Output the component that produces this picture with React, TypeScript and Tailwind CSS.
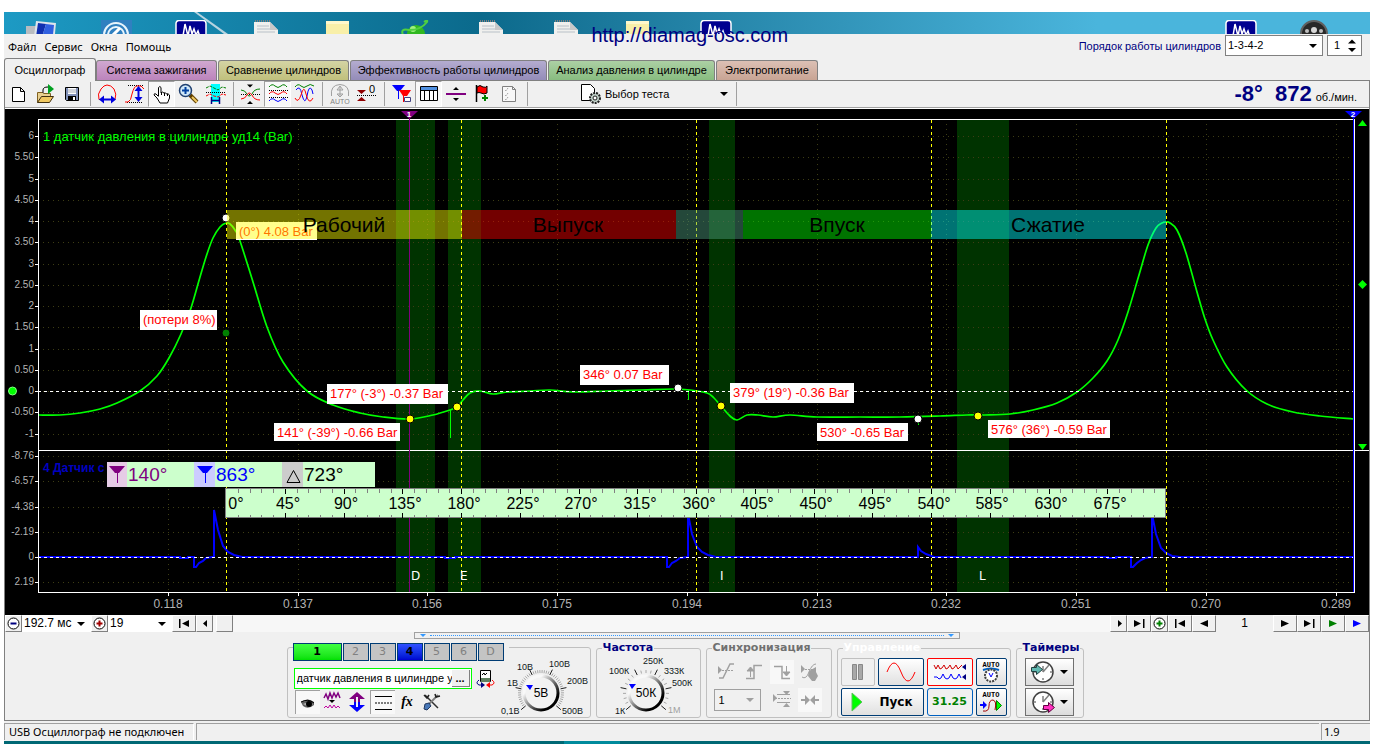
import type { ReactNode } from "react";

const UI = "font-['Liberation_Sans',Arial,sans-serif]";
const TAHOMA = "font-['Noto_Sans','DejaVu_Sans',sans-serif]";

type Pt = [number, number];

// Catmull-Rom spline through the sample points
function spline(points: Pt[]) {
  let d = `M${points[0][0]} ${points[0][1]}`;
  for (let i = 0; i < points.length - 1; i++) {
    const p0 = points[Math.max(0, i - 1)];
    const p1 = points[i];
    const p2 = points[i + 1];
    const p3 = points[Math.min(points.length - 1, i + 2)];
    d += `C${p1[0] + (p2[0] - p0[0]) / 6} ${p1[1] + (p2[1] - p0[1]) / 6} ${p2[0] - (p3[0] - p1[0]) / 6} ${p2[1] - (p3[1] - p1[1]) / 6} ${p2[0]} ${p2[1]}`;
  }
  return d;
}

const PRESSURE: Pt[] = [
  [39, 415], [60, 415], [80, 413], [100, 409], [117, 403], [140, 391], [157, 376], [169, 358], [181, 334],
  [191, 308], [200, 277], [207, 254], [213, 238], [220, 227], [226, 223], [230, 224], [235, 230], [240, 241],
  [253, 282], [267, 327], [283, 362], [307, 391], [333, 405], [360, 413], [383, 417], [410, 419], [433, 415],
  [450, 410], [457, 407], [463, 400], [470, 393], [480, 391], [493, 394], [507, 392], [530, 391], [550, 390],
  [573, 392], [607, 391], [640, 390], [673, 389], [690, 390], [707, 393], [714, 398], [721, 406], [730, 416],
  [737, 420], [747, 415], [758, 415], [773, 417], [790, 415], [817, 417], [860, 417], [900, 417], [940, 416],
  [967, 415], [985, 415], [1010, 414], [1033, 410], [1057, 403], [1077, 392], [1093, 378], [1107, 361],
  [1118, 340], [1128, 312], [1139, 275], [1148, 245], [1156, 228], [1162, 223], [1166, 222], [1170, 223],
  [1177, 230], [1186, 253], [1197, 292], [1205, 319], [1213, 340], [1227, 367], [1246, 390], [1267, 404],
  [1293, 412], [1320, 416], [1353, 419],
];

const IGNITION =
  "M39 557H180v1h8v-1h6v10h2l3-4 4-2 3-3 6-1h2V510l4 20 5 16 5 6 6 3 8 2H445v1h10v-1H667v10h2l3-4 4-2 4-3 7-1h1V514l4 20 5 13 5 5 6 3 8 2H918V547l3 4 5 3 8 3H1108v1h8v-1h15v10h2l4-4 4-3 4-2 6-1h1V514l4 20 5 14 5 5 6 3 8 1H1353";

const UPPER: [string, number][] = [
  ["6", 136], ["5.50", 157], ["5", 179], ["4.50", 200], ["4", 221], ["3.50", 242], ["3", 264], ["2.50", 285],
  ["2", 306], ["1.50", 327], ["1", 349], ["0.50", 370], ["0", 391], ["-0.50", 412], ["-1", 434],
];
const LOWER: [string, number][] = [
  ["-8.76", 456], ["-6.57", 481], ["-4.38", 507], ["-2.19", 532], ["0", 557], ["2.19", 582],
];
const TIMES: [string, number][] = [
  ["0.118", 168], ["0.137", 298], ["0.156", 427], ["0.175", 557], ["0.194", 687],
  ["0.213", 817], ["0.232", 946], ["0.251", 1076], ["0.270", 1206], ["0.289", 1336],
];
const WINDOWS = [
  { x: 396, w: 39, name: "D", at: 411 },
  { x: 448, w: 33, name: "E", at: 460 },
  { x: 709, w: 26, name: "I", at: 720 },
  { x: 957, w: 52, name: "L", at: 979 },
];
const CALLOUTS = [
  { x: 140, y: 310, w: 77, h: 20, t: "(потери 8%)" },
  { x: 327, y: 384, w: 121, h: 20, t: "177° (-3°) -0.37 Bar" },
  { x: 274, y: 423, w: 126, h: 18, t: "141° (-39°) -0.66 Bar" },
  { x: 580, y: 365, w: 89, h: 20, t: "346° 0.07 Bar" },
  { x: 730, y: 383, w: 124, h: 20, t: "379° (19°) -0.36 Bar" },
  { x: 817, y: 423, w: 91, h: 18, t: "530° -0.65 Bar" },
  { x: 988, y: 420, w: 122, h: 18, t: "576° (36°) -0.59 Bar" },
  { x: 236, y: 222, w: 81, h: 18, t: "(0°) 4.08 Bar" },
];
const DOTS: [number, number, string][] = [
  [226, 218, "#fff"], [226, 333, "#008000"], [410, 419, "#ff0"], [457, 407, "#ff0"],
  [678, 388, "#fff"], [721, 406, "#ff0"], [918, 419, "#fff"], [978, 416, "#ff0"],
];
const PHASES = [
  { x: 227, w: 235, c: "#ffff00", t: "Рабочий", at: 344 },
  { x: 462, w: 214, c: "#ff0000", t: "Выпуск", at: 568 },
  { x: 676, w: 67, c: "#50a080", t: "", at: 0 },
  { x: 743, w: 188, c: "#00ff00", t: "Впуск", at: 837 },
  { x: 931, w: 235, c: "#00ffff", t: "Сжатие", at: 1048 },
];

function Scope() {
  return (
    <svg
      viewBox="5 109 1364 506"
      className="block w-full h-auto bg-black font-['Liberation_Sans',Arial,sans-serif]"
      role="img"
      aria-label="Осциллограмма"
    >
      {/* cylinder windows and grid */}
      <g shapeRendering="crispEdges">
        {WINDOWS.map((b) => (
          <rect key={b.name} x={b.x} y={120} width={b.w} height={472} fill="#003300" />
        ))}
        {[...UPPER, ...LOWER].map(([t, y]) => (
          <g key={t + y}>
            <path d={`M43 ${y + 0.5}H1353`} stroke="#3d3d14" strokeDasharray="1 4" />
            <path d={`M35 ${y + 0.5}H38`} stroke="#fff" />
          </g>
        ))}
        {TIMES.map(([t, x]) => (
          <g key={t}>
            <path d={`M${x + 0.5} 124V592`} stroke="#3d3d14" strokeDasharray="1 4" />
            <path d={`M${x + 0.5} 593V596`} stroke="#fff" />
          </g>
        ))}
      </g>

      <g className="text-[10px]" fill="#b4b4b4" textAnchor="end">
        {[...UPPER, ...LOWER].map(([t, y]) => (
          <text key={t + y} x={34} y={y + 3}>{t}</text>
        ))}
      </g>
      <g className="text-[12px]" fill="#b4b4b4" textAnchor="middle">
        {TIMES.map(([t, x]) => (
          <text key={t} x={x} y={608}>{t}</text>
        ))}
      </g>

      <text x={43} y={141} className="text-[13px]" fill="#00ff00">1 датчик давления в цилиндре уд14 (Bar)</text>
      <text x={43} y={472} className="text-[12px] font-bold" fill="#0000c0">4 Датчик с</text>

      {/* traces */}
      <path d={IGNITION} fill="none" stroke="#0000ff" strokeWidth={2} />
      <path d={spline(PRESSURE)} fill="none" stroke="#00ff00" strokeWidth={1.7} />
      <path d="M450.5 410V438M688.5 390V400M918.5 418V425" stroke="#00ff00" />

      <g shapeRendering="crispEdges" fill="none">
        <path d="M38 391.5H1353M38 557.5H1353" stroke="#fff" strokeDasharray="3 3" />
        <path d="M226.5 120V592M461.5 120V592M696.5 120V592M931.5 120V592M1166.5 120V592" stroke="#ffff00" strokeDasharray="3 3" />
        <path d="M38.5 593V119.5H1354.5V592.5H38M38 450.5H1369" stroke="#fff" />
        <path d="M409.5 118V592" stroke="#800080" />
        <path d="M1353.5 118V592" stroke="#0000ff" />
      </g>

      {DOTS.map(([x, y, c]) => (
        <circle key={x + "-" + y} cx={x} cy={y} r={4} fill={c} stroke="#000" />
      ))}
      {CALLOUTS.map((c) => (
        <g key={c.t}>
          <rect x={c.x} y={c.y} width={c.w} height={c.h} fill="#fff" />
          <text x={c.x + 3} y={c.y + 14} className="text-[13px]" fill="#ff0000">{c.t}</text>
        </g>
      ))}

      {/* stroke phases */}
      {PHASES.map((p) => (
        <g key={p.c}>
          <rect x={p.x} y={210} width={p.w} height={29} fill={p.c} opacity={0.45} shapeRendering="crispEdges" />
          <text x={p.at} y={232} textAnchor="middle" className="text-[21px]" fill="#000">{p.t}</text>
        </g>
      ))}

      <g className="text-[12px] font-['DejaVu_Sans',sans-serif]" fill="#fff">
        {WINDOWS.map((b) => (
          <text key={b.name} x={b.at} y={580}>{b.name}</text>
        ))}
      </g>

      {/* cursor read-out */}
      <rect x={107} y={462} width={268} height={25} fill="#ccffcc" />
      <rect x={107} y={462} width={20} height={25} fill="#e6cce6" />
      <rect x={194} y={462} width={21} height={25} fill="#ccccff" />
      <rect x={282} y={462} width={21} height={25} fill="#cccccc" />
      <path d="M109 466H125L119 473H115z" fill="#800080" />
      <path d="M117.5 470V483" stroke="#800080" />
      <path d="M197 466H213L207 473H203z" fill="#0000ff" />
      <path d="M205.5 470V483" stroke="#0000ff" />
      <path d="M287 482.5L293.5 470.5L300 482.5z" fill="none" stroke="#000" />
      <g className="text-[19px]">
        <text x={128} y={481} fill="#800080">140°</text>
        <text x={216} y={481} fill="#0000ff">863°</text>
        <text x={304} y={481} fill="#000">723°</text>
      </g>

      {/* crank angle ruler */}
      <rect x={225.5} y={488.5} width={940} height={29} fill="#ccffcc" stroke="#808080" />
      <g shapeRendering="crispEdges">
        {Array.from({ length: 79 }, (_, i) => i + 1).map((i) => {
          const x = Math.round(226 + i * 11.75) + 0.5;
          const major = i % 5 === 0;
          return (
            <path
              key={i}
              d={major ? `M${x} 489V494M${x} 513V518` : `M${x} 489V493M${x} 515V518`}
              stroke={major ? "#000" : "#808080"}
            />
          );
        })}
      </g>
      <g className="text-[16px]" textAnchor="middle">
        {Array.from({ length: 16 }, (_, i) => (
          <text key={i} x={i === 0 ? 236 : Math.round(226 + i * 58.72) + 3} y={509}>{i * 45}°</text>
        ))}
      </g>

      {/* cursor flags and level markers */}
      <path d="M401 111H418L409.5 119z" fill="#800080" />
      <path d="M1345 111H1362L1353.5 119z" fill="#0000ff" />
      <g className="text-[8px] font-bold" fill="#fff" textAnchor="middle">
        <text x={409} y={117}>1</text>
        <text x={1353} y={117}>2</text>
      </g>
      <g fill="#00ff00">
        <path d="M1358 126L1362.5 120L1367 126z" />
        <path d="M1358 284.5L1362.5 280L1367 284.5L1362.5 289z" />
        <path d="M1358 444L1367 444L1362.5 450z" />
        <circle cx={12.5} cy={391} r={4} stroke="#80ff80" />
      </g>
    </svg>
  );
}

function Ico({ children, w = 24, h = 24 }: { children: ReactNode; w?: number; h?: number }) {
  return (
    <svg width={w} height={h} viewBox={`0 0 ${w} ${h}`} fill="none" className="shrink-0" aria-hidden="true">
      {children}
    </svg>
  );
}

function Tool({ label, on, children }: { label: string; on?: boolean; children: ReactNode }) {
  return (
    <button
      aria-label={label}
      className={
        on
          ? "w-[27px] h-[26px] flex items-center justify-center border border-t-[#a0a0a0] border-l-[#a0a0a0] border-r-white border-b-white bg-[#f8f8f8]"
          : "w-[27px] h-[26px] flex items-center justify-center"
      }
    >
      {children}
    </button>
  );
}

function Sep() {
  return <div className="w-2 h-6 flex justify-center shrink-0"><div className="w-px bg-[#a0a0a0]" /></div>;
}

function DownArrow() {
  return (
    <svg width="8" height="4" viewBox="0 0 8 4" aria-hidden="true" className="shrink-0">
      <path d="M0 0h8L4 4z" fill="currentColor" />
    </svg>
  );
}

function Toolbar() {
  return (
    <div className="flex items-center h-[27px] border-b border-[#a0a0a0]">
      <Tool label="Новый"><Ico><path d="M5.500 5.500h8l4 4v10h-12zM13.500 5.500v4h4" fill="#fff" stroke="#000" /></Ico></Tool>
      <Tool label="Открыть">
        <Ico>
          <path d="M3.500 20.500v-10h5l1 1h7v3" fill="#e8d090" stroke="#806020" />
          <path d="M3.500 20.500l4-6h12l-4 6z" fill="#f0c860" stroke="#403010" />
          <path d="M9 11V8q0-3 5-3" stroke="#000" />
          <path d="M14 2l6 5-6 5z" fill="#00a020" />
        </Ico>
      </Tool>
      <Tool label="Сохранить">
        <Ico>
          <path d="M4.500 5.500h13v13h-12l-1-1z" fill="#8090b8" stroke="#000" />
          <path d="M7 6h8v6H7z" fill="#fff" />
          <path d="M7 8h8M7 10h8" stroke="#a0a8b8" />
          <path d="M7 14h8v4H7z" fill="#000" />
          <path d="M12 15h2v3h-2z" fill="#fff" />
        </Ico>
      </Tool>
      <Sep />
      <Tool label="Период">
        <Ico>
          <path d="M6 17.500H3Q1 12 5 7Q8 3 11 3Q15 3 18 7Q21 12 19 17.500h-3" stroke="#ff0000" />
          <path d="M6 17.500h10" stroke="#0000e0" strokeWidth="2" />
          <path d="M3 17.500l5-4v8zM20 17.500l-5-4v8z" fill="#0000e0" />
        </Ico>
      </Tool>
      <Tool label="Амплитуда">
        <Ico>
          <path d="M5 3.500h16M4 20.500h16" stroke="#000" strokeDasharray="1 1" />
          <path d="M2 20h3q3-1 4-8q2-8 5-8h4l3 3" stroke="#ff0000" />
          <path d="M15.500 8v9" stroke="#0000e0" strokeWidth="2" />
          <path d="M15.500 4l-4 5h8zM15.500 20l-4-5h8z" fill="#0000e0" />
        </Ico>
      </Tool>
      <Tool label="Рука" on>
        <Ico>
          <path d="M8.500 14V5.500q1.500-2 2.500 0V11q1-2 3 0q1.500-1 2.500 1q1.500-1 3 1v3l-2 5H10l-3-5-3-3q0-2 2-1l2.500 2.500" fill="#fff" stroke="#000" />
          <path d="M11.500 10v3M14.500 11v3M17.500 12v2" stroke="#000" />
        </Ico>
      </Tool>
      <Tool label="Масштаб">
        <Ico>
          <path d="M13 13l7 7" stroke="#604000" strokeWidth="4" />
          <path d="M15 15l5 5" stroke="#f0c860" strokeWidth="2" />
          <circle cx="8.500" cy="8.500" r="6" fill="#d0e8f8" stroke="#204070" strokeWidth="1.500" />
          <path d="M5 8.500h7M8.500 5v7" stroke="#0040a0" strokeWidth="2" />
        </Ico>
      </Tool>
      <Tool label="Участок">
        <Ico>
          <path d="M7 2h9v18H7z" fill="#00ffff" />
          <path d="M2 6l4-2 4 2 4 2 4-3 4 1" stroke="#008000" strokeDasharray="3 1" />
          <path d="M2 10.500h20" stroke="#000" strokeDasharray="1 1" />
          <path d="M2 14l4-2 4 2 4 1 4-3 4 1" stroke="#ff0000" strokeDasharray="3 1" />
          <path d="M7.500 15v7M15.500 15v7M8 18.500h7" stroke="#000080" strokeWidth="1.500" />
        </Ico>
      </Tool>
      <Sep />
      <Tool label="Совместить">
        <Ico>
          <path d="M2 12.500h19" stroke="#000" strokeDasharray="1 1" />
          <path d="M2 8q4 0 6 4t5 0q2-5 8-5" stroke="#008000" />
          <path d="M2 17q4 0 6-4t5 0q2 5 8 5" stroke="#ff0000" />
          <path d="M8 2.500h6l-3 3zM8 22h6l-3-3z" fill="#000" />
        </Ico>
      </Tool>
      <Tool label="Разделить" on>
        <Ico>
          <path d="M3 5q3-4 6-1t6 0 6 1" stroke="#008000" />
          <path d="M3 8.500h19M3 15.500h19" stroke="#000" strokeDasharray="1 1" />
          <path d="M3 12q3-4 6-1t6 0 6 1" stroke="#ff0000" />
          <path d="M3 19q3-4 6-1t6 0 6 1" stroke="#0000ff" />
        </Ico>
      </Tool>
      <Tool label="Наложить">
        <Ico>
          <path d="M2 5q3-4 6-1t6 0 7 0" stroke="#008000" />
          <path d="M3 8Q7 2 9 13Q12 24 14 14Q16 2 19 8l1 4" stroke="#0000ff" />
          <path d="M2 16Q5 22 8 13Q11 2 13 12Q16 24 20 16" stroke="#ff0000" />
        </Ico>
      </Tool>
      <Sep />
      <Tool label="Авто">
        <Ico>
          <path d="M3.500 14Q2 3 12 2.500Q22 3 20.500 14" stroke="#a0a0a0" />
          <path d="M12 5v9M12 4l-3 4h6zM12 15l-3-3h6z" stroke="#a0a0a0" />
          <text x="12" y="21.500" textAnchor="middle" className="text-[7px] font-['Liberation_Sans',sans-serif]" fill="#808080">AUTO</text>
        </Ico>
      </Tool>
      <Tool label="Ноль">
        <Ico>
          <path d="M2 8h9l-4.500 4zM2 19h9l-4.500-4z" fill="#900000" />
          <path d="M2 13.500h19" stroke="#000" strokeDasharray="1 1" />
          <text x="14" y="11" className="text-[11px] font-['Liberation_Sans',sans-serif]" fill="#000">0</text>
        </Ico>
      </Tool>
      <Sep />
      <Tool label="Маркеры">
        <Ico>
          <path d="M2 3h13l-5 6H7z" fill="#0000ff" />
          <path d="M8.500 8v9" stroke="#0000ff" />
          <path d="M9 8h12l-4 6h-4z" fill="#ff0000" />
          <path d="M13.500 13v7" stroke="#ff0000" />
          <path d="M14.500 15.500h6v4h-6z" fill="#fff" stroke="#404080" />
        </Ico>
      </Tool>
      <Tool label="Таблица" on>
        <Ico>
          <path d="M3.500 4.500h17v14h-17z" fill="#fff" stroke="#000" />
          <path d="M4 5h16v3H4z" fill="#5090e0" />
          <path d="M3.500 8.500h17M7.500 8.500v10M12.500 8.500v10M16.500 8.500v10" stroke="#000" />
        </Ico>
      </Tool>
      <Tool label="Линия">
        <Ico><path d="M2 11h20v2H2z" fill="#800080" /><path d="M9 8h6l-3-3zM9 16h6l-3 3z" fill="#000" /></Ico>
      </Tool>
      <Tool label="Добавить флаг">
        <Ico>
          <path d="M5.500 3v17" stroke="#000" strokeWidth="1.500" />
          <path d="M6 5q3-3 6 0 3 1 4-1v7q-3 2-6 0-2-1-4 0z" fill="#ff0000" stroke="#000" />
          <path d="M11 16h6M14 13v6" stroke="#008000" strokeWidth="2" />
        </Ico>
      </Tool>
      <Tool label="Отчёт">
        <Ico>
          <path d="M4.500 4.500h10l3 3v12h-13z" fill="#f8f8f8" stroke="#808080" />
          <path d="M14.500 4.500v3h3" stroke="#808080" />
          <path d="M7 8l1 1 2-3M7 13l1 1 2-3M7 17l1 1 2-3" stroke="#909090" strokeDasharray="1 1" />
        </Ico>
      </Tool>
      <Sep />

      <button className="ml-[50px] w-[151px] flex items-center gap-1 pr-1 text-left">
        <Ico w={20} h={20}>
          <path d="M0.500 0.500h9l4 4v12h-13z" fill="#fff" stroke="#000" />
          <circle cx="14" cy="14" r="5" fill="#c0d0c8" stroke="#202020" strokeWidth="2" strokeDasharray="2 1" />
          <circle cx="14" cy="14" r="2" fill="#fff" stroke="#202020" />
        </Ico>
        <span className="flex-1">Выбор теста</span>
        <DownArrow />
      </button>
      <Sep />

      <div className="ml-auto pr-3 flex items-baseline text-[#000080]">
        <span className="text-[22px] leading-6 font-bold mr-3">-8°</span>
        <span className="text-[22px] leading-6 font-bold mr-1">872</span>
        <span className="text-black">об./мин.</span>
      </div>
    </div>
  );
}

function Notepad() {
  return (
    <svg width="26" height="30" viewBox="0 0 26 30">
      <path d="M1 2h16l8 8v20H1z" fill="#f0f0ee" />
      <path d="M17 2v8h8z" fill="#c8c8c8" />
      <path d="M2 1h15" stroke="#808080" strokeWidth="2" strokeDasharray="1 1" />
      <path d="M4 6h12M4 9h13M4 12h18" stroke="#b8c0c8" />
    </svg>
  );
}

function Sticky() {
  return <svg width="23" height="24" viewBox="0 0 23 24"><path d="M0 1h23v23H0z" fill="#f8efa8" /><path d="M0 1h23v3H0z" fill="#fdf8cc" /></svg>;
}

function ScopeShortcut() {
  return (
    <svg width="32" height="30" viewBox="0 0 32 30" fill="none">
      <rect x="1" y="0.500" width="30" height="30" rx="3" fill="#000090" stroke="#fff" strokeWidth="1.500" />
      <path d="M8 16l2-12 2 8 1 4 2-10 2 8 2-5 2 6 2-4 2 6" stroke="#fff" strokeWidth="1.500" />
    </svg>
  );
}

function Desktop() {
  return (
    <div className="relative h-[22px] overflow-hidden bg-linear-to-r from-[#1d9ac4] via-[#0b6a8c] via-35% to-[#4ab5dc] to-80%">
      <svg className="absolute left-[190px] top-0" width="40" height="22" viewBox="0 0 40 22"><path d="M0 0l30 22h4L3 0z" fill="#b8d4e0" /></svg>
      <div className="absolute left-[22px] top-2">
        <svg width="32" height="24" viewBox="0 0 32 24">
          <path d="M0 6h10v18H0z" fill="#b8bcc0" />
          <path d="M10 1l20 2-2 21H7z" fill="#dce4ec" />
          <path d="M12 3l8 1-6 20h-5z" fill="#1030b0" />
          <path d="M20 4l8 1-2 19H14z" fill="#3060e0" />
        </svg>
      </div>
      <div className="absolute left-[97px] top-2">
        <svg width="31" height="30" viewBox="0 0 31 30" fill="none">
          <path d="M0 0h31v30H0z" fill="#3080c0" />
          <circle cx="15" cy="15" r="12" stroke="#e8f4fc" strokeWidth="2" />
          <circle cx="15" cy="15" r="8" stroke="#e8f4fc" strokeWidth="2" />
          <path d="M11 16l8-8" stroke="#fff" strokeWidth="3" />
        </svg>
      </div>
      <div className="absolute left-[171px] top-2"><ScopeShortcut /></div>
      <div className="absolute left-[249px] top-2"><Notepad /></div>
      <div className="absolute left-[322px] top-2"><Sticky /></div>
      <div className="absolute left-[397px] top-2">
        <svg width="30" height="24" viewBox="0 0 30 24" fill="none">
          <circle cx="15" cy="14" r="9" fill="#30b820" />
          <circle cx="12" cy="9" r="3" fill="#a0f080" />
          <path d="M2 15Q-1 8 8 10Q20 10 26 2Q27-1 23 2" stroke="#50d040" strokeWidth="2" />
        </svg>
      </div>
      <div className="absolute left-[474px] top-2"><Notepad /></div>
      <div className="absolute left-[549px] top-2"><Notepad /></div>
      <div className="absolute left-[622px] top-2"><Sticky /></div>
      <div className="absolute left-[696px] top-2"><ScopeShortcut /></div>
      <div className="absolute right-[113px] top-2"><ScopeShortcut /></div>
      <div className="absolute right-[42px] top-2">
        <svg width="28" height="28" viewBox="0 0 28 28">
          <circle cx="14" cy="14" r="13" fill="#282828" stroke="#606060" strokeWidth="2" />
          <circle cx="14" cy="10" r="3" fill="#d8d8d8" />
          <circle cx="7" cy="11" r="2" fill="#c0c0c0" />
          <circle cx="21" cy="11" r="2" fill="#c0c0c0" />
        </svg>
      </div>
    </div>
  );
}

const TABS = [
  { t: "Система зажигания", c: "w-[121px] bg-linear-to-b from-[#d0a8d0] to-[#bc84bc]" },
  { t: "Сравнение цилиндров", c: "w-[131px] bg-linear-to-b from-[#d4d4a4] to-[#c0c07c]" },
  { t: "Эффективность работы цилиндров", c: "w-[197px] bg-linear-to-b from-[#b4acd0] to-[#948cb8]" },
  { t: "Анализ давления в цилиндре", c: "w-[167px] bg-linear-to-b from-[#acd0a4] to-[#88bc80]" },
  { t: "Электропитание", c: "w-[102px] bg-linear-to-b from-[#dcc0b4] to-[#c8a494]" },
];

const BEVEL = "h-[17px] bg-[#f0f0f0] border border-t-white border-l-white border-r-[#808080] border-b-[#808080] flex items-center justify-center shrink-0";

function NavButton({ label, d, color = "#000", wide = true }: { label: string; d: string; color?: string; wide?: boolean }) {
  return (
    <button aria-label={label} className={`${BEVEL} ${wide ? "w-6" : "w-[17px]"}`}>
      <Ico w={12} h={9}><path d={d} fill={color} /></Ico>
    </button>
  );
}

function ZoomButton({ label, color, plus }: { label: string; color: string; plus?: boolean }) {
  return (
    <button aria-label={label} className={`${BEVEL} w-[17px]`}>
      <Ico w={13} h={13}>
        <circle cx="6.500" cy="6.500" r="5.500" fill="#fff" stroke="#000" />
        <path d={plus ? "M3.500 6.500h6M6.500 3.500v6" : "M3.500 6.500h6"} stroke={color} strokeWidth="2" />
      </Ico>
    </button>
  );
}

const FIRST = "M1 0h1.500v9H1zM11 1v7L4 4.500z";
const LAST = "M10 0h1.500v9H10zM1 1v7l7-3.500z";
const LEFT = "M10 1v7L2 4.500z";
const RIGHT = "M2 1v7l8-3.500z";

function ScrollRow() {
  return (
    <div className="flex h-[17px] bg-[#f7f7f7]">
      <ZoomButton label="Сжать" color="#000080" />
      <div className="relative w-[69px] bg-white">
        <select aria-label="Развёртка" className="appearance-none w-full h-full pl-[2px] text-[12px] leading-[17px] outline-none"><option>192.7 мс</option></select>
        <span className="absolute right-[6px] top-[7px] pointer-events-none"><DownArrow /></span>
      </div>
      <ZoomButton label="Растянуть" color="#a00000" plus />
      <div className="relative w-[64px] bg-white">
        <select aria-label="Деление" className="appearance-none w-full h-full pl-[2px] text-[12px] leading-[17px] outline-none"><option>19</option></select>
        <span className="absolute right-[6px] top-[7px] pointer-events-none"><DownArrow /></span>
      </div>
      <NavButton label="В начало" d={FIRST} />
      <NavButton label="Влево" d="M8 1v7L4 4.500z" wide={false} />
      <div className="flex-1 pl-[3px]"><div className={`${BEVEL} w-[17px]`} /></div>
      <NavButton label="Вправо" d="M5 1v7l4-3.500z" wide={false} />
      <NavButton label="В конец" d={LAST} />
      <ZoomButton label="Добавить страницу" color="#008000" plus />
      <NavButton label="Первая страница" d={FIRST} />
      <NavButton label="Предыдущая страница" d={LEFT} />
      <span className="w-[57px] text-center text-[12px] leading-[17px] bg-[#f0f0f0]">1</span>
      <NavButton label="Следующая страница" d={RIGHT} />
      <NavButton label="Последняя страница" d={LAST} />
      <NavButton label="Воспроизвести" d={RIGHT} color="#008000" />
      <NavButton label="Прокрутить" d={RIGHT} color="#0000ff" />
    </div>
  );
}

type DialLabel = [string, number, number, string?];

function Dial({ value, labels, cx, cy, dense, pointer }: { value: string; labels: DialLabel[]; cx: number; cy: number; dense?: boolean; pointer: string }) {
  const count = dense ? 46 : 21;
  return (
    <svg width="94" height="64" viewBox="0 0 94 64" role="img" aria-label={value} className="shrink-0 font-['Liberation_Sans',Arial,sans-serif]">
      <defs>
        <linearGradient id={`rim${value}`} x1="0.100" y1="0.100" x2="0.900" y2="0.900">
          <stop offset="0.200" stopColor="#f8f8f8" />
          <stop offset="0.500" stopColor="#808080" />
          <stop offset="0.850" stopColor="#000" />
        </linearGradient>
      </defs>
      {Array.from({ length: count }, (_, i) => {
        const a = ((140 + (i * 260) / (count - 1)) * Math.PI) / 180;
        const key = i % (dense ? 9 : 4) === 0;
        const r2 = key ? 26 : 23;
        return (
          <line
            key={i}
            x1={cx + 20 * Math.cos(a)} y1={cy + 20 * Math.sin(a)}
            x2={cx + r2 * Math.cos(a)} y2={cy + r2 * Math.sin(a)}
            stroke={key ? "#202020" : "#a8a8a8"}
          />
        );
      })}
      <circle cx={cx} cy={cy} r={17} fill="#f2f2f2" stroke={`url(#rim${value})`} strokeWidth={3} />
      <path d={pointer} fill="#0000ff" />
      <text x={cx} y={cy + 4} textAnchor="middle" className="text-[12px]">{value}</text>
      {labels.map(([t, x, y, c]) => (
        <text key={t} x={x} y={y} className="text-[9px]" fill={c ?? "#101820"}>{t}</text>
      ))}
    </svg>
  );
}

const CHANNELS = ["2", "3", "4", "5", "6", "D"];

function ChannelGroup() {
  return (
    <div className="mt-[5px] h-[71px] w-[304px] border border-[#c0c0c0] rounded-[3px] flex">
      <div className="w-[214px] pl-[5px] shrink-0">
        <div className="-mt-[5px] h-[18px] w-[216px] flex bg-[#f0f0f0] font-['DejaVu_Sans',sans-serif] text-[11px]">
          <button className="w-[49px] border border-[#003c74] bg-linear-to-b from-[#40ff40] to-[#00e000] font-bold">1</button>
          {CHANNELS.map((c) => (
            <button
              key={c}
              className={
                c === "4"
                  ? "w-[26px] ml-px border border-[#003c74] bg-linear-to-b from-[#3050ff] to-[#0000d0] font-bold"
                  : "w-[26px] ml-px border border-[#003c74] bg-[#c4c4c4] text-[#808080]"
              }
            >
              {c}
            </button>
          ))}
        </div>
        <div className="flex items-center mt-[7px] ml-px">
          <div className="flex h-[21px] w-[178px] border border-[#00ff00] bg-white p-px">
            <input aria-label="Датчик" defaultValue="датчик давления в цилиндре уд14" className="min-w-0 flex-1 pl-px outline-none" />
            <button aria-label="Выбрать датчик" className="w-[18px] bg-[#f0f0f0] border-r border-b border-[#808080] font-bold leading-[10px]">...</button>
          </div>
          <button aria-label="Инвертировать" className="ml-1">
            <Ico w={20} h={20}>
              <path d="M4.500 1.500h10v11h-10z" fill="#fff" stroke="#000" />
              <path d="M5 9h9v4H5z" fill="#608060" />
              <path d="M6 6l2-2 1 2 2-2" stroke="#000" />
              <path d="M3 11q-4 3 0 5h3" stroke="#000080" />
              <path d="M5 13l4 3-4 3z" fill="#000080" />
              <path d="M16 11q4 3 0 5h-3" stroke="#ff0000" />
              <path d="M14 13l-4 3 4 3z" fill="#ff0000" />
            </Ico>
          </button>
        </div>
        <div className="flex mt-px ml-[2px]">
          <button aria-label="Видимость" className="w-[25px] h-6 border-t border-l border-[#a0a0a0] bg-[#f8f8f8]">
            <Ico>
              <path d="M5 11q7-5 13 0v3q-6 5-11 1z" fill="#606060" />
              <path d="M7 13q5-3 10 0-4 4-8 1z" fill="#b0b0b0" />
              <circle cx="13" cy="13" r="3" fill="#000" />
              <path d="M5 11q7-4 13 1" stroke="#000" />
            </Ico>
          </button>
          <button aria-label="Фильтр" className="w-[25px] h-6">
            <Ico>
              <path d="M4 8l2-4 2 5 2-6 2 5 2-5 2 4 2-4 2 5" stroke="#800080" strokeWidth="1.500" />
              <path d="M9 10h6l-3 3z" fill="#000" />
              <path d="M4 18l2-2 2 2 2-3 2 3 2-3 2 3 2-2 2 2" stroke="#c000a0" />
            </Ico>
          </button>
          <button aria-label="Сдвиг" className="w-[25px] h-6">
            <Ico>
              <path d="M12 2l8 7h-5v3H9V9H4z" fill="#800080" />
              <path d="M12 22l-8-7h5v-3h6v3h5z" fill="#0000ff" />
              <path d="M12 7v10" stroke="#f0f0f0" strokeWidth="2" />
            </Ico>
          </button>
          <button aria-label="Уровни" className="w-[25px] h-6 border-t border-l border-[#a0a0a0] bg-[#f8f8f8]">
            <Ico><path d="M4 5.500h17M4 18.500h17" stroke="#000" /><path d="M4 12h17" stroke="#000" strokeDasharray="2 1" /></Ico>
          </button>
          <button aria-label="Формула" className="w-[25px] h-6 text-[14px] font-bold italic font-['Liberation_Serif',serif] leading-6">fx</button>
          <button aria-label="Настройка" className="w-[25px] h-6">
            <Ico>
              <path d="M5 5l13 13" stroke="#303030" strokeWidth="1.500" />
              <path d="M18 5L9 14" stroke="#808080" strokeWidth="2" />
              <path d="M5 14l4-1 2 3-4 4-3-1z" fill="#4878b8" stroke="#203860" />
              <path d="M4 5l3 3 2-3M15 4l1 3 4-1" stroke="#202020" strokeWidth="1.500" />
            </Ico>
          </button>
        </div>
      </div>
      <div className="pt-[6px] -ml-1">
        <Dial
          value="5В"
          cx={43}
          cy={39}
          dense
          pointer="M28 31h7l-3 5z"
          labels={[["10В", 19, 16], ["100В", 51, 13], ["1В", 9, 32], ["200В", 69, 30], ["0,1В", 3, 60], ["500В", 64, 60]]}
        />
      </div>
    </div>
  );
}

function Group({ title, legend, size, children }: { title: string; legend: string; size: string; children: ReactNode }) {
  return (
    <fieldset className={`h-[76px] border border-[#c0c0c0] rounded-[3px] ${size}`}>
      <legend className={`ml-[5px] px-px text-[11px] leading-3 font-bold font-['DejaVu_Sans',sans-serif] ${legend}`}>{title}</legend>
      {children}
    </fieldset>
  );
}

function SyncGroup() {
  return (
    <Group title="Синхронизация" legend="text-[#707070]" size="w-[126px]">
      <div className="pl-[7px] pr-[5px] pt-[6px] grid grid-cols-4 items-center gap-y-1 text-[#a0a0a0]">
        <Ico>
          <path d="M4 6l4 4-4 4z" fill="#a0a0a0" />
          <path d="M5 10.500h15" stroke="#a0a0a0" strokeDasharray="2 1" />
          <path d="M5 18h4l7-14h4" stroke="#a0a0a0" strokeWidth="1.500" />
        </Ico>
        <Ico><path d="M4 18.500h8v-13h8" stroke="#a0a0a0" strokeWidth="1.500" /><path d="M8.500 17v-8M5 11l3.500-4 3.500 4z" stroke="#a0a0a0" fill="#a0a0a0" /></Ico>
        <Ico>
          <path d="M0 0h24v24H0z" fill="#f8f8f8" />
          <path d="M4 6.500h8v12h8" stroke="#a0a0a0" strokeWidth="1.500" />
          <path d="M16.500 6v9M13 12l3.500 4 3.500-4z" stroke="#a0a0a0" fill="#a0a0a0" />
        </Ico>
        <Ico>
          <path d="M3 5l4 4-4 4z" fill="#a0a0a0" />
          <path d="M4 9.500h14" stroke="#a0a0a0" strokeDasharray="2 1" />
          <path d="M4 17q4 3 7-5t7-8" stroke="#a0a0a0" />
          <path d="M11 11l7-4v5l2 4-3 5h-3l-4-5z" fill="#a0a0a0" />
        </Ico>
        <div className="relative col-span-2 w-[47px] text-black">
          <select aria-label="Канал синхронизации" className="appearance-none w-full h-[22px] border border-[#a0a0a0] pl-1 outline-none"><option>1</option></select>
          <span className="absolute right-[7px] top-[9px] text-[#a0a0a0] pointer-events-none"><DownArrow /></span>
        </div>
        <Ico>
          <path d="M3 6l4 4-4 4z" fill="#a0a0a0" />
          <path d="M5 10.500h16" stroke="#a0a0a0" strokeDasharray="2 1" />
          <path d="M7 6.500h13M7 14.500h13" stroke="#a0a0a0" />
          <path d="M13 3h7l-3.500 4zM13 19h7l-3.500-4z" fill="#a0a0a0" />
        </Ico>
        <Ico>
          <path d="M0 0h24v24H0z" fill="#f8f8f8" />
          <path d="M3 11h4V7l5 5-5 5v-4H3zM21 11h-4V7l-5 5 5 5v-4h4z" fill="#a0a0a0" />
        </Ico>
      </div>
    </Group>
  );
}

const XP = "h-7 flex items-center justify-center rounded-[2px] border border-[#003c74] bg-linear-to-b from-white to-[#e0e0e0]";

function ControlGroup() {
  return (
    <Group title="Управление" legend="text-white" size="w-[174px]">
      <div className="pl-[3px] pt-1 grid grid-cols-[34px_46px_46px_31px] gap-x-[3px] gap-y-[2px]">
        <button aria-label="Пауза" className="h-7 flex items-center justify-center rounded-[2px] border border-[#c0c0c0]">
          <Ico w={14} h={16}><path d="M1.500 0.500h4v15h-4zM7.500 0.500h4v15h-4z" fill="#a8a8a8" stroke="#888" /></Ico>
        </button>
        <button aria-label="Один кадр" className={XP}>
          <Ico w={30} h={22}><path d="M1 11Q8-7 15 11T29 11" stroke="#ff0000" /></Ico>
        </button>
        <button aria-label="Самописец" className="h-7 flex items-center justify-center rounded-[2px] border border-[#ff0000] bg-[#f8f8f8]">
          <Ico w={34} h={20}>
            <path d="M1 3l2 4 2-4 2 4 2-1 2-3 2 4 2-1 2-3 2 4 2-1 2-3 2 4 2-2 2-2" stroke="#d00000" />
            <path d="M1 15h3l2 2 2-1 2-4 2 4 2 1 2-1 2-4 2 4 2 1 2-1 2-4 2 4" stroke="#0000ff" />
            <path d="M33 2v6l-4-3zM33 12v6l-4-3z" fill="#000080" />
          </Ico>
        </button>
        <button aria-label="Автонастройка" className={XP}>
          <Ico w={26} h={24}>
            <text x="13" y="7" textAnchor="middle" className="text-[7px] font-bold font-['Liberation_Mono',monospace]" fill="#000">AUTO</text>
            <path d="M5 10q8-3 16 0" stroke="#0060c0" strokeWidth="2" />
            <circle cx="13" cy="15.500" r="6" fill="#fff" stroke="#404040" strokeWidth="2" strokeDasharray="2 1" />
            <path d="M11 13l2 4 2-4" stroke="#0000ff" />
          </Ico>
        </button>
        <button className={`${XP} col-span-2 text-[12px] font-bold font-['DejaVu_Sans',sans-serif]`}>
          <Ico w={12} h={20}><path d="M1 1l10 9-10 9z" fill="#00ff00" stroke="#60c060" /></Ico>
          <span className="ml-4">Пуск</span>
        </button>
        <output className="h-7 flex items-center justify-center rounded-[3px] border border-[#0060c0] text-[11px] font-bold font-['DejaVu_Sans',sans-serif] text-[#008000]">31.25</output>
        <button aria-label="Автозапуск" className={XP}>
          <Ico w={26} h={24}>
            <text x="13" y="7" textAnchor="middle" className="text-[7px] font-bold font-['Liberation_Mono',monospace]" fill="#000">AUTO</text>
            <path d="M2 14h3v-3l4 4-4 4v-3H2z" fill="#0000ff" />
            <path d="M5 21q6 1 6-5t4-6q4 1 2 10" stroke="#a00000" />
            <path d="M18.500 10.500l5 5-5 5z" fill="#00ff00" stroke="#008000" />
          </Ico>
        </button>
      </div>
    </Group>
  );
}

function TimerButton({ label, children }: { label: string; children: ReactNode }) {
  return (
    <button aria-label={label} className="h-7 w-[49px] flex items-center gap-1 pl-1 border border-[#707070] bg-linear-to-b from-white to-[#dcdcdc]">
      <Ico w={26} h={24}>
        <circle cx="13" cy="12" r="10" fill="#fff" stroke="#404040" strokeWidth="1.500" />
        <path d="M13 12l6-7M13 12V6M4 12h2M13 20v-2M22 12h-2" stroke="#808080" strokeWidth="1.500" />
        {children}
      </Ico>
      <DownArrow />
    </button>
  );
}

export default function App() {
  return (
    <div className={`min-h-screen bg-white pt-3 text-[11px] text-black ${UI}`}>
      <div className="relative ml-1 mr-3 bg-[#f0f0f0]">
        <Desktop />
        <a href="http://diamag-osc.com" className="absolute left-[43%] top-3 text-[20px] leading-[23px] text-[#000080]">http://diamag-osc.com</a>

        <header className="flex justify-between h-6">
          <nav className={`flex gap-2 pl-1 pt-[5px] h-5 leading-4 ${TAHOMA}`}>
            <button>Файл</button>
            <button>Сервис</button>
            <button>Окна</button>
            <button>Помощь</button>
          </nav>
          <div className="flex items-start pt-px pr-2">
            <label htmlFor="order" className="mr-1 leading-[22px] text-[#000080]">Порядок работы цилиндров</label>
            <div className="relative w-[98px] mr-1">
              <select id="order" className="appearance-none w-full h-[21px] border border-[#808080] bg-white pl-[2px] outline-none"><option>1-3-4-2</option></select>
              <span className="absolute right-[6px] top-[9px] pointer-events-none"><DownArrow /></span>
            </div>
            <div className="flex w-[35px] h-[21px] border border-[#808080] bg-white items-center">
              <input aria-label="Цилиндр" defaultValue="1" className="w-4 pl-[6px] outline-none" />
              <button aria-label="Изменить цилиндр" className="ml-1"><Ico w={9} h={14}><path d="M0 4.500h8L4 0.500zM0 9h8l-4 4z" fill="#000" /></Ico></button>
            </div>
          </div>
        </header>

        <div className="flex items-end h-[23px] border-b border-[#808080]">
          <button className="w-[92px] h-[23px] -mb-px bg-[#f0f0f0] border border-b-0 border-[#808080] rounded-t-[3px]">Осциллограф</button>
          {TABS.map((t) => (
            <button key={t.t} className={`h-5 mr-px border border-b-0 border-[#808080] rounded-t-[3px] whitespace-nowrap ${t.c}`}>{t.t}</button>
          ))}
        </div>

        <main className="border-x border-[#808080]">
          <Toolbar />
          <div className="h-px bg-white" />
          <Scope />
          <ScrollRow />
          <div className="flex justify-center">
            <div className="w-2/5 h-[7px] border border-[#a0a0a0] flex items-center justify-between px-[5px] text-[#3399ff]">
              <Ico w={6} h={3}><path d="M0 0h6L3 3z" fill="#3399ff" /></Ico>
              <div className="flex-1 mx-1 border-t border-dotted border-[#3399ff]" />
              <Ico w={6} h={3}><path d="M0 0h6L3 3z" fill="#3399ff" /></Ico>
            </div>
          </div>
          <div className="flex justify-center gap-[5px] pt-[3px] pb-[2px] pr-1">
            <ChannelGroup />
            <Group title="Частота" legend="text-[#000080]" size="w-[105px]">
              <div className="pl-1 pt-[2px]">
                <Dial
                  value="50К"
                  cx={45}
                  cy={37}
                  pointer="M28 28h7l-4 5z"
                  labels={[["250К", 42, 8], ["100К", 8, 18], ["333К", 63, 18], ["500К", 71, 30], ["1К", 14, 58], ["1М", 67, 57, "#a0a0a0"]]}
                />
              </div>
            </Group>
            <SyncGroup />
            <ControlGroup />
            <Group title="Таймеры" legend="text-[#000080]" size="w-[68px]">
              <div className="pl-2 pt-1 grid gap-[2px]">
                <TimerButton label="Таймер запуска"><path d="M1.500 7.500h5v-3l6 5-6 5v-3h-5z" fill="#60b8b0" stroke="#204040" /></TimerButton>
                <TimerButton label="Таймер остановки"><path d="M13.500 15.500h5v-3l6 5-6 5v-3h-5z" fill="#ff30c0" stroke="#600040" /></TimerButton>
              </div>
            </Group>
          </div>
        </main>

        <footer className={`border-t border-[#808080] pt-[2px] pb-px flex gap-[2px] leading-4 ${TAHOMA}`}>
          <span className="w-[190px] pl-1 border-t border-l border-[#a0a0a0] border-r border-r-white">USB Осциллограф не подключен</span>
          <span className="flex-1 border-t border-l border-[#a0a0a0]" />
          <span className="w-[49px] pl-[2px] border-t border-l border-[#a0a0a0]">1.9</span>
        </footer>
        <div className="h-1 bg-[#006874] flex justify-center"><div className="w-14 bg-[#008a9c] mr-[190px]" /></div>
      </div>
    </div>
  );
}
